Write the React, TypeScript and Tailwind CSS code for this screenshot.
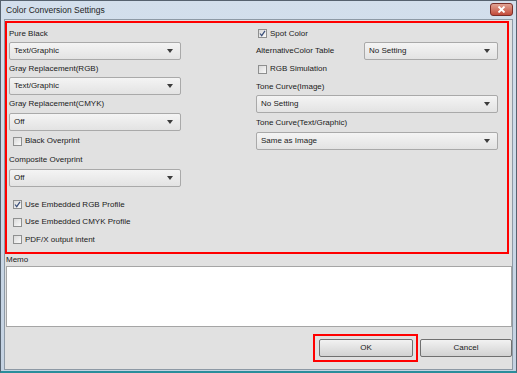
import React from "react";

const font = { fontFamily: '"Liberation Sans", Arial, sans-serif' };

const Arrow = () => (
  <svg width="6" height="4" viewBox="0 0 6 4" className="shrink-0">
    <path d="M0 0h6L3 4z" fill="#3c3c3c" />
  </svg>
);

const Select = ({ value, className = "" }: { value: string; className?: string }) => (
  <div
    className={`h-[18px] flex items-center justify-between pl-[4px] pr-[7px] border border-[#a9a9a9] rounded-[2px] bg-gradient-to-b from-[#f4f4f4] to-[#e3e3e3] text-[#1a1a1a] ${className}`}
  >
    <span>{value}</span>
    <Arrow />
  </div>
);

const Check = ({ label, checked = false, className = "" }: { label: string; checked?: boolean; className?: string }) => (
  <div className={`flex items-center gap-[3px] ${className}`}>
    <div className="w-[9px] h-[9px] border border-[#8e8f8f] bg-gradient-to-br from-[#d9d9d9] to-[#fafafa] flex items-center justify-center">
      {checked && (
        <svg width="7" height="7" viewBox="0 0 7 7">
          <path d="M1 3.5l1.7 2.2L6 0.8" fill="none" stroke="#3a4f7a" strokeWidth="1.2" />
        </svg>
      )}
    </div>
    <span className="text-[#1a1a1a]">{label}</span>
  </div>
);

const Label = ({ text, h = "h-[17px]" }: { text: string; h?: string }) => (
  <div className={`${h} flex items-center text-[#1a1a1a]`}>{text}</div>
);

export default function App() {
  return (
    <div
      className="w-[517px] h-[373px] flex flex-col bg-gradient-to-b from-[#d3dfec] to-[#c4d2e2] border-l border-r border-t border-[#56626f] border-b-2 border-b-[#2a8d9b] text-[8px] leading-none"
      style={font}
    >
      {/* title bar */}
      <div className="h-[18px] flex items-center justify-between pl-[5px] pr-[3px]">
        <span className="text-[8.5px] text-[#1e1e1e]">Color Conversion Settings</span>
        <div className="w-[23px] h-[13px] mb-[2px] rounded-[3px] border border-[#7a2f2a] bg-gradient-to-b from-[#e0a394] to-[#c2493a] flex items-center justify-center">
          <svg width="9" height="7" viewBox="0 0 9 7">
            <path d="M1.5 0.5l6 6M7.5 0.5l-6 6" stroke="#ffffff" strokeWidth="1.8" />
          </svg>
        </div>
      </div>

      {/* client area */}
      <div className="flex-1 mx-[3px] mb-[1px] border border-[#8d99a5] bg-[#e1e1e1] flex flex-col">
        <div className="mt-[1px] w-[504px] h-[233px] border-2 border-[#ff0000] flex pt-[2px] pl-[2px]">
          {/* left column */}
          <div className="w-[172px] flex flex-col">
            <Label text="Pure Black" />
            <Select value="Text/Graphic" />
            <Label text="Gray Replacement(RGB)" />
            <Select value="Text/Graphic" />
            <Label text="Gray Replacement(CMYK)" h="h-[18px]" />
            <Select value="Off" />
            <Check label="Black Overprint" className="h-[20px] pl-[4px]" />
            <Label text="Composite Overprint" h="h-[18px]" />
            <Select value="Off" />
            <div className="mt-[9px] flex flex-col">
              <Check label="Use Embedded RGB Profile" checked className="h-[17px] pl-[4px]" />
              <Check label="Use Embedded CMYK Profile" className="h-[18px] pl-[4px]" />
              <Check label="PDF/X output intent" className="h-[17px] pl-[4px]" />
            </div>
          </div>

          {/* right column */}
          <div className="ml-[75px] w-[242px] flex flex-col">
            <Check label="Spot Color" checked className="h-[17px] pl-[2px]" />
            <div className="flex items-center justify-between">
              <span className="text-[#1a1a1a]">AlternativeColor Table</span>
              <Select value="No Setting" className="w-[134px]" />
            </div>
            <Check label="RGB Simulation" className="h-[18px] pl-[2px]" />
            <Label text="Tone Curve(Image)" />
            <Select value="No Setting" />
            <Label text="Tone Curve(Text/Graphic)" h="h-[19px]" />
            <Select value="Same as Image" />
          </div>
        </div>

        {/* memo */}
        <div className="h-[12px] flex items-center pl-[1px] text-[#1a1a1a]">Memo</div>
        <div className="ml-[1px] w-[506px] h-[61px] bg-white border border-[#a5a5a5]" />

        {/* buttons */}
        <div className="mt-[7px] flex items-center justify-end">
          <div className="border-2 border-[#ff0000] pl-[4px] pr-[3px] py-[3px]">
            <button className="w-[94px] h-[18px] rounded-[2px] border border-[#707070] bg-gradient-to-b from-[#f2f2f2] to-[#d2d2d2] text-[#1a1a1a] text-[8px]">
              OK
            </button>
          </div>
          <button className="ml-[2px] w-[92px] h-[18px] rounded-[2px] border border-[#707070] bg-gradient-to-b from-[#f2f2f2] to-[#d2d2d2] text-[#1a1a1a] text-[8px]">
            Cancel
          </button>
        </div>
      </div>
    </div>
  );
}
